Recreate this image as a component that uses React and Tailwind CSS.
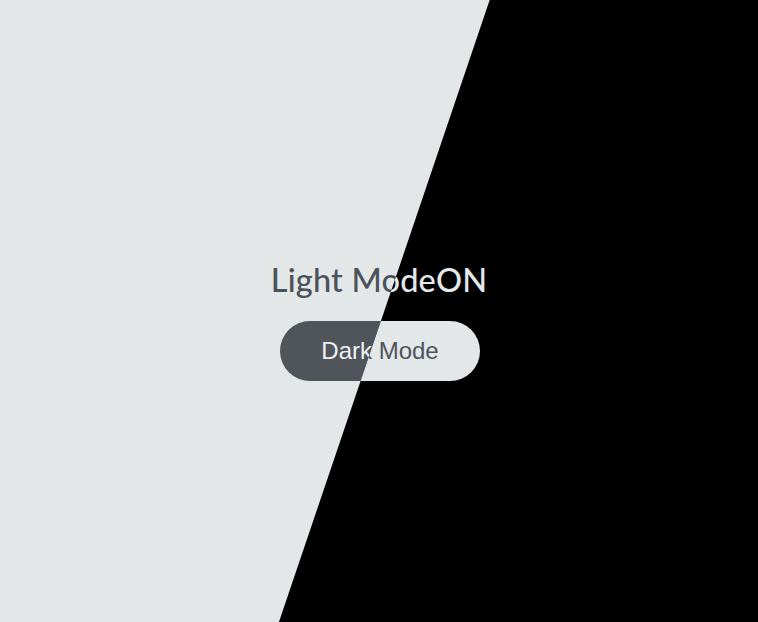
import React from 'react';

function Content({ dark }) {
  return (
    <div className="flex h-full flex-col items-center justify-center pt-[18px]">
      <h1
        className={`text-[32.5px] font-medium tracking-[0.2px] leading-[40px] ${dark ? 'text-[#e4e8ea]' : 'text-[#4a525a]'}`}
        style={{ fontFamily: 'Lato, "Open Sans", sans-serif' }}
      >
        Light ModeON
      </h1>
      <button
        className={`ml-[2px] mt-[21px] h-[60px] w-[200px] rounded-full text-[24px] ${dark ? 'bg-[#e3e7e8] text-[#4d545b]' : 'bg-[#50555b] text-[#eef1f2]'}`}
        style={{ fontFamily: '"Liberation Sans", Arial, sans-serif' }}
      >
        Dark Mode
      </button>
    </div>
  );
}

export default function App() {
  return (
    <div className="relative h-[622px] w-[758px] overflow-hidden bg-[#e3e7e8]">
      <Content dark={false} />
      {/* black diagonal half with inverted copy */}
      <div className="absolute inset-0 bg-black [clip-path:polygon(64.6%_0,100%_0,100%_100%,36.8%_100%)]">
        <Content dark />
      </div>
    </div>
  );
}
